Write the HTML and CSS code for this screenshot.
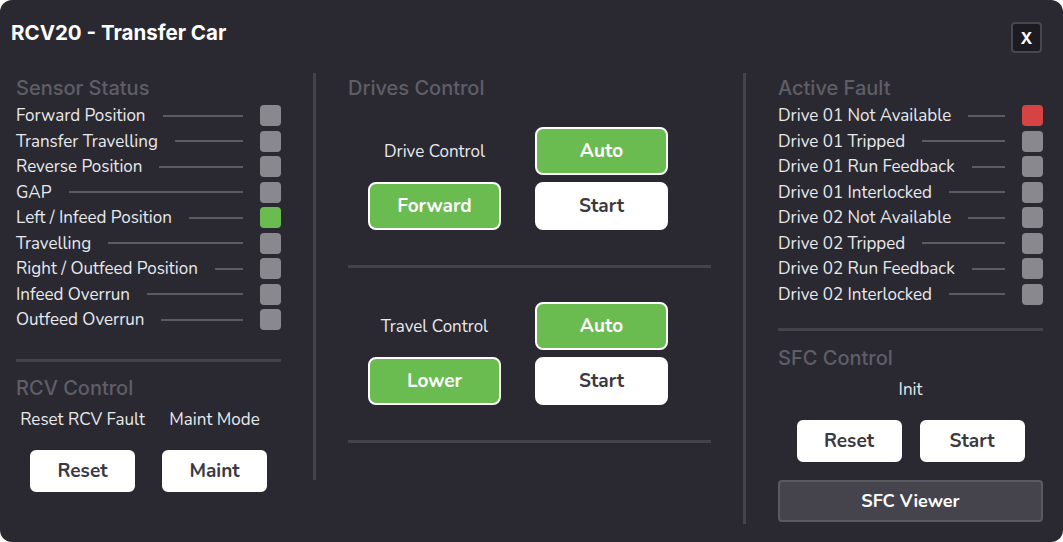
FILE: index.html
```html
<!DOCTYPE html>
<html lang="en">

<head>
    <meta charset="UTF-8">
    <meta name="viewport" content="width=device-width, initial-scale=1.0">
    <title>RCV20 - Transfer Car</title>
    <link rel="stylesheet" href="styles.css">
</head>

<body>
    <div class="dialog">
        <div class="dialog-header">
            <h1 class="dialog-title">RCV20 - Transfer Car</h1>
            <button class="close-button">X</button>
        </div>

        <div class="dialog-body">
            <!-- Colonna sensori -->
            <div class="column">
                <h2 class="section-title">Sensor Status</h2>
                <ul class="status-list">
                    <li class="status-row"><span>Forward Position</span><i class="leader"></i><b class="lamp"></b></li>
                    <li class="status-row"><span>Transfer Travelling</span><i class="leader"></i><b class="lamp"></b></li>
                    <li class="status-row"><span>Reverse Position</span><i class="leader"></i><b class="lamp"></b></li>
                    <li class="status-row"><span>GAP</span><i class="leader"></i><b class="lamp"></b></li>
                    <li class="status-row"><span>Left / Infeed Position</span><i class="leader"></i><b class="lamp on"></b></li>
                    <li class="status-row"><span>Travelling</span><i class="leader"></i><b class="lamp"></b></li>
                    <li class="status-row"><span>Right / Outfeed Position</span><i class="leader"></i><b class="lamp"></b></li>
                    <li class="status-row"><span>Infeed Overrun</span><i class="leader"></i><b class="lamp"></b></li>
                    <li class="status-row"><span>Outfeed Overrun</span><i class="leader"></i><b class="lamp"></b></li>
                </ul>
                <hr class="divider sensor-divider">
                <h2 class="section-title rcv-title">RCV Control</h2>
                <div class="pair-grid">
                    <span class="pair-label">Reset RCV Fault</span>
                    <span class="pair-label">Maint Mode</span>
                    <button class="btn btn-white btn-small">Reset</button>
                    <button class="btn btn-white btn-small">Maint</button>
                </div>
            </div>

            <div class="vsep short"></div>

            <!-- Colonna azionamenti -->
            <div class="column">
                <h2 class="section-title">Drives Control</h2>
                <div class="drive-grid first">
                    <span class="drive-label">Drive Control</span>
                    <button class="btn btn-green">Auto</button>
                    <button class="btn btn-green">Forward</button>
                    <button class="btn btn-white">Start</button>
                </div>
                <hr class="divider">
                <div class="drive-grid">
                    <span class="drive-label">Travel Control</span>
                    <button class="btn btn-green">Auto</button>
                    <button class="btn btn-green">Lower</button>
                    <button class="btn btn-white">Start</button>
                </div>
                <hr class="divider">
            </div>

            <div class="vsep long"></div>

            <!-- Colonna allarmi -->
            <div class="column">
                <h2 class="section-title">Active Fault</h2>
                <ul class="status-list">
                    <li class="status-row"><span>Drive 01 Not Available</span><i class="leader"></i><b class="lamp fault"></b></li>
                    <li class="status-row"><span>Drive 01 Tripped</span><i class="leader"></i><b class="lamp"></b></li>
                    <li class="status-row"><span>Drive 01 Run Feedback</span><i class="leader"></i><b class="lamp"></b></li>
                    <li class="status-row"><span>Drive 01 Interlocked</span><i class="leader"></i><b class="lamp"></b></li>
                    <li class="status-row"><span>Drive 02 Not Available</span><i class="leader"></i><b class="lamp"></b></li>
                    <li class="status-row"><span>Drive 02 Tripped</span><i class="leader"></i><b class="lamp"></b></li>
                    <li class="status-row"><span>Drive 02 Run Feedback</span><i class="leader"></i><b class="lamp"></b></li>
                    <li class="status-row"><span>Drive 02 Interlocked</span><i class="leader"></i><b class="lamp"></b></li>
                </ul>
                <hr class="divider fault-divider">
                <h2 class="section-title sfc-title">SFC Control</h2>
                <div class="sfc-state">Init</div>
                <div class="sfc-buttons">
                    <button class="btn btn-white btn-small">Reset</button>
                    <button class="btn btn-white btn-small">Start</button>
                </div>
                <button class="btn btn-viewer">SFC Viewer</button>
            </div>
        </div>
    </div>
</body>

</html>
```

FILE: styles.css
```css
body {
    margin: 0;
    background-color: #ffffff;
    font-family: "Nunito", Lato, "Open Sans", sans-serif;
    color: #e9e9ec;
}

.dialog {
    width: 1063px;
    height: 542px;
    box-sizing: border-box;
    background-color: #2a2932;
    border-radius: 12px;
    overflow: hidden;
}

.dialog-header {
    display: flex;
    justify-content: space-between;
    align-items: flex-start;
    padding: 20px 21px 0 11px;
    height: 53px;
    box-sizing: border-box;
}

.dialog-title {
    margin: 0;
    font-family: Inter, "Noto Sans", sans-serif;
    font-size: 20.5px;
    font-weight: 700;
    color: #ffffff;
    line-height: 26px;
}

.close-button {
    width: 31px;
    height: 31px;
    margin-top: 2px;
    background-color: #1c1b21;
    border: 2px solid #48474f;
    border-radius: 4px;
    color: #ffffff;
    font-family: Inter, sans-serif;
    font-size: 16px;
    font-weight: 700;
    padding: 0;
}

/* Griglia principale a tre colonne */
.dialog-body {
    display: grid;
    grid-template-columns: 265px 3px 363px 3px 265px;
    column-gap: 32px;
    padding-left: 16px;
    align-items: start;
}

.vsep {
    background-color: #44434b;
    margin-top: 20px;
}

.vsep.short {
    height: 407px;
}

.vsep.long {
    height: 451px;
}

.section-title {
    margin: 24px 0 0;
    font-family: Inter, "Noto Sans", sans-serif;
    font-size: 20px;
    font-weight: 500;
    color: #5f5e67;
    line-height: 22px;
}

.status-list {
    list-style: none;
    margin: 4px 0 0;
    padding: 0;
}

.status-row {
    display: flex;
    align-items: center;
    height: 25.5px;
    font-size: 17px;
}

.status-row span {
    white-space: nowrap;
}

.leader {
    flex: 1;
    height: 2px;
    margin: 0 17px;
    background-color: #5c5b63;
}

.lamp {
    width: 21px;
    height: 21px;
    border-radius: 4px;
    background-color: #89888e;
}

.lamp.on {
    background-color: #6abb50;
}

.lamp.fault {
    background-color: #d74343;
}

.divider {
    border: none;
    height: 3px;
    margin: 0;
    background-color: #44434b;
}

.sensor-divider {
    margin-top: 26px;
}

.rcv-title {
    margin-top: 15px;
}

.pair-grid {
    display: grid;
    grid-template-columns: 105px 105px;
    column-gap: 27px;
    row-gap: 19px;
    padding-left: 14px;
    margin-top: 9px;
}

.pair-label {
    justify-self: center;
    font-size: 17px;
    white-space: nowrap;
}

.btn {
    font-family: "Nunito", Lato, sans-serif;
    font-weight: 700;
    font-size: 19px;
    border-radius: 8px;
    cursor: pointer;
}

.btn-white {
    background-color: #ffffff;
    color: #3a3941;
    border: 2px solid #ffffff;
}

.btn-green {
    background-color: #6abb50;
    color: #ffffff;
    border: 2px solid #ffffff;
}

.btn-small {
    height: 42px;
    border-radius: 6px;
}

/* Blocchi di controllo azionamenti */
.drive-grid {
    display: grid;
    grid-template-columns: 133px 133px;
    grid-template-rows: 48px 48px;
    column-gap: 34px;
    row-gap: 7px;
    padding-left: 20px;
    margin: 34px 0 35px;
}

.drive-grid.first {
    margin-top: 28px;
}

.drive-label {
    align-self: center;
    text-align: center;
    font-size: 17px;
}

.fault-divider {
    margin-top: 21px;
}

.sfc-title {
    margin-top: 16px;
}

.sfc-state {
    text-align: center;
    font-size: 17px;
    margin-top: 9px;
}

.sfc-buttons {
    display: flex;
    justify-content: center;
    gap: 18px;
    margin-top: 19px;
}

.sfc-buttons .btn {
    width: 105px;
}

.pair-grid .btn {
    width: 105px;
}

.btn-viewer {
    display: block;
    width: 100%;
    height: 42px;
    margin-top: 18px;
    background-color: #45444c;
    border: 2px solid #5b5a62;
    border-radius: 4px;
    color: #ffffff;
    font-size: 18px;
}
```
